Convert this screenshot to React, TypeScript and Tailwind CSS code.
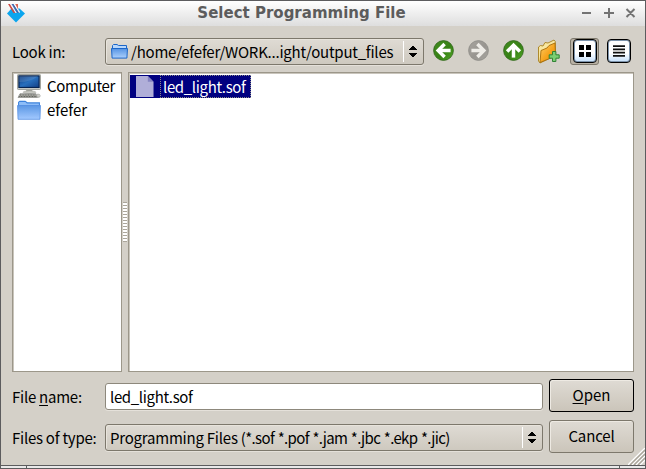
import React from "react";

const UI_FONT = "font-['Noto_Sans_CJK_SC','Noto_Sans',sans-serif]";

function UpDownArrows() {
  return (
    <svg width="8" height="12" viewBox="0 0 8 12" shapeRendering="crispEdges">
      <path d="M3 0h2v1h1v1h1v1h1v1H0V3h1V2h1V1h1z" />
      <path d="M0 7h8v1H7v1H6v1H5v1H3v-1H2V9H1V8H0z" />
    </svg>
  );
}

function Folder({ w, h }: { w: number; h: number }) {
  return (
    <svg width={w} height={h} viewBox="0 0 23 20" preserveAspectRatio="none">
      <defs>
        <linearGradient id="folder" x1="0" y1="0" x2="0" y2="1">
          <stop offset="0" stopColor="#5b97e4" />
          <stop offset="1" stopColor="#a3c9ff" />
        </linearGradient>
      </defs>
      <path d="M1 19V2L2.5.7H8L10 2.2H22V19z" fill="#3c82dc" />
      <path d="M2 2h6l1.5 1.5H21V5H2z" fill="#8dbdf8" />
      <path d="M.5 5.5h22L22 19.3H1z" fill="url(#folder)" stroke="#5992e3" strokeWidth=".8" />
    </svg>
  );
}

function SmallFolder() {
  return (
    <svg width="17" height="15" viewBox="0 0 17 15">
      <defs>
        <linearGradient id="smallFolder" x1="0" y1="0" x2="0" y2="1">
          <stop offset="0" stopColor="#5493e3" />
          <stop offset="1" stopColor="#acd0fc" />
        </linearGradient>
      </defs>
      <path d="M1.5 13.5V1.5L2.5.5H6L7.5 1.5h8v12z" fill="#b8d7fb" stroke="#1b66c9" />
      <path d="M.5 4.5h16l-.6 9.6H1.1z" fill="url(#smallFolder)" stroke="#1b66c9" />
    </svg>
  );
}

function Computer() {
  return (
    <svg width="24" height="24" viewBox="0 0 24 24">
      <defs>
        <linearGradient id="screen" x1="0" y1="0" x2="1" y2="1">
          <stop offset="0" stopColor="#0c3a80" />
          <stop offset=".5" stopColor="#286fbd" />
          <stop offset="1" stopColor="#123f85" />
        </linearGradient>
      </defs>
      <rect x=".5" y=".5" width="23" height="15" rx=".8" fill="#d9dad2" stroke="#8e9189" strokeWidth=".8" />
      <rect x="1.9" y="1.9" width="20.2" height="11.6" fill="url(#screen)" stroke="#062350" strokeWidth="1.2" />
      <path d="M2 2h19Q14 8 2 8z" fill="#fff" opacity=".12" />
      <path d="M9.5 15.5h5.5l1 3H8.5z" fill="#a7a9a2" />
      <ellipse cx="12.5" cy="18.2" rx="6.5" ry="1.3" fill="#c9cac4" stroke="#8b8d87" strokeWidth=".4" />
      <path d="M3 19.7h16l1.5 3.8H1z" fill="#b4b5af" stroke="#777973" strokeWidth=".6" />
      <path d="M3 21h15.5M2.3 22.5h17" stroke="#4e504b" strokeWidth=".9" strokeDasharray="1 .6" />
      <path d="M20.5 20q2.7 0 2.7 1.8t-2 1.6z" fill="#dadbd5" stroke="#858780" strokeWidth=".5" />
    </svg>
  );
}

function RoundArrow({ turn, gray }: { turn: number; gray?: boolean }) {
  const id = gray ? "disc-gray" : "disc-green";
  return (
    <svg width="21" height="22" viewBox="0 0 21 22">
      <defs>
        <linearGradient id={id} x1="0" y1="0" x2="1" y2="1">
          <stop offset="0" stopColor={gray ? "#a7a49e" : "#438c22"} />
          <stop offset=".55" stopColor={gray ? "#989590" : "#378115"} />
          <stop offset="1" stopColor={gray ? "#aaa8a2" : "#52a827"} />
        </linearGradient>
      </defs>
      <circle cx="10.5" cy="10.5" r="9.9" fill={`url(#${id})`} stroke={gray ? "#8d8b87" : "#2e641b"} strokeWidth=".8" />
      <g transform={`rotate(${turn} 10.5 10.5)`} fill="none" stroke={gray ? "#eeece7" : "#fff"} strokeWidth="3.5">
        <path d="M17.6 10.5H6" />
        <path d="M11.6 4.1L5.2 10.5l6.4 6.4" strokeLinejoin="miter" />
      </g>
    </svg>
  );
}

function NewFolder() {
  return (
    <svg width="24" height="25" viewBox="0 0 24 25">
      <defs>
        <linearGradient id="orange" x1="0" y1="0" x2="1" y2="1">
          <stop offset="0" stopColor="#ffd06a" />
          <stop offset=".55" stopColor="#f6a31c" />
          <stop offset="1" stopColor="#e88d00" />
        </linearGradient>
      </defs>
      <path d="M1.5 22V8l2-1.5L6 7l2-3.5 3 .5L17 1l1.3 1.5v14L3 24z" fill="#f8e7a0" stroke="#a7801f" strokeWidth=".9" />
      <path d="M4 11.5l6-2.5 2-2.5 6-2.5.6 13L3 23.5z" fill="url(#orange)" stroke="#a66c0b" strokeWidth=".9" />
      <path d="M15.5 12.5h3.4v3.3h3.3v3.4h-3.3v3.3h-3.4v-3.3h-3.3v-3.4h3.3z" fill="#7bce72" stroke="#318335" strokeWidth="1" />
    </svg>
  );
}

function ViewButton({ children }: { children: React.ReactNode }) {
  return (
    <div className="flex h-6 w-6 items-center justify-center rounded-[4px] border border-black bg-linear-to-b from-white from-60% to-[#c3dffb] shadow-[inset_0_0_0_1px_#7d93ab]">
      {children}
    </div>
  );
}

function Label({ children }: { children: React.ReactNode }) {
  return <div className="w-[93px] shrink-0 tracking-[-0.25px] whitespace-nowrap">{children}</div>;
}

function PushButton({ children, main }: { children: React.ReactNode; main?: boolean }) {
  return (
    <button
      className={`flex h-[33px] w-[85px] items-center justify-center rounded-[3px] border bg-linear-to-b from-[#dfdbd4] to-[#cbc5ba] pb-[2px] leading-none shadow-[inset_1px_1px_0_#eeeae3] ${
        main ? "border-black" : "border-[#7d786c]"
      }`}
    >
      <span>{children}</span>
    </button>
  );
}

const COMBO =
  "flex h-[27px] items-center rounded-[3px] border border-[#7d786c] bg-linear-to-b from-[#dfdbd4] to-[#cec9bf] shadow-[inset_1px_1px_0_#e8e4dc,0_1px_0_#e5e1da]";

export default function App() {
  return (
    <div
      className={`flex h-[469px] w-[646px] flex-col overflow-hidden border border-[#5c5c5e] bg-[#d4d0c8] text-[15px] leading-5 text-black ${UI_FONT}`}
    >
      <header className="flex h-[25px] shrink-0 items-center bg-linear-to-b from-white to-[#dedede]">
        <svg className="mb-px ml-[5px]" width="20" height="20" viewBox="0 0 20 20">
          <path d="M1 10.5L5.5 5.5h8l5.5 5-9 9z" fill="#0ba5ee" />
          <path d="M2 1h2l5.5 9H7.4z" fill="#cf4b43" />
          <path d="M4 1h1.5l5.5 9H9.5z" fill="#f4f4f8" />
          <path d="M5.5 1h2.2l5.5 9H11z" fill="#4169ae" />
          <path d="M7.7 1h1.5l4.8 8-.8 1z" fill="#fff" />
          <path d="M9.2 1H12v5.7L13.5 9z" fill="#db6656" />
        </svg>
        <h1 className="flex-1 pr-[2px] pb-[2px] text-center font-['DejaVu_Sans',sans-serif] text-[15px] font-bold whitespace-nowrap text-[#5c5c5c]">
          Select Programming File
        </h1>
        <svg className="mr-2 mb-[2px]" width="58" height="12" viewBox="0 0 58 12" fill="none" stroke="#737373" strokeWidth="2">
          <path d="M3 6h9M25 6h10M30 1v10M47.5 2l8 8M55.5 2l-8 8" />
        </svg>
      </header>

      <main className="flex shrink-0 flex-col pr-[11px] pl-[11px]">
        <div className="mt-3 flex h-[27px] items-center">
          <Label>Look in:</Label>
          <div className={`${COMBO} w-[319px]`}>
            <div className="ml-[5px] flex shrink-0"><SmallFolder /></div>
            <span className="ml-[3px] min-w-0 flex-1 tracking-[-0.23px] whitespace-nowrap">/home/efefer/WORK...ight/output_files</span>
            <div className="h-[21px] w-px shrink-0 bg-white" />
            <div className="mr-[6px] ml-[5px] shrink-0"><UpDownArrows /></div>
          </div>
          <div className="ml-[9px] flex items-center gap-[14px] pb-[2px]">
            <RoundArrow turn={0} />
            <RoundArrow turn={180} gray />
            <RoundArrow turn={90} />
          </div>
          <div className="ml-[13px]"><NewFolder /></div>
          <div className="ml-[9px] flex h-[27px] w-[29px] justify-center rounded-[3px] border border-[#7d786c] bg-[#b9b2a5]">
            <ViewButton>
              <svg width="12" height="12" viewBox="0 0 12 12" shapeRendering="crispEdges">
                <path d="M0 0h5v5H0zM7 0h5v5H7zM0 7h5v5H0zM7 7h5v5H7z" />
              </svg>
            </ViewButton>
          </div>
          <div className="ml-2 pb-px">
            <ViewButton>
              <svg width="12" height="12" viewBox="0 0 12 12" stroke="#111">
                <path d="M0 1.2h12M0 4.4h12M0 7.6h12M0 10.8h12" strokeWidth="1.7" />
              </svg>
            </ViewButton>
          </div>
        </div>

        <div className="mt-[7px] flex h-[300px]">
          <aside className="w-[110px] shrink-0 border border-[#9c978a] bg-white shadow-[inset_1px_1px_0_#c9c5bc]">
            <div className="flex h-[26px] items-center pl-1">
              <Computer />
              <span className="ml-[6px] tracking-[-0.3px]">Computer</span>
            </div>
            <div className="flex h-[22px] items-center pl-1">
              <Folder w={24} h={20} />
              <span className="ml-[6px]">efefer</span>
            </div>
          </aside>
          <div className="flex w-[6px] items-center justify-center">
            <div className="h-10 w-1 bg-[repeating-linear-gradient(to_bottom,#aaa59a_0px,#aaa59a_1px,#ffffff_1px,#ffffff_3px)]" />
          </div>
          <section className="flex-1 border border-[#9c978a] bg-white pt-[2px] pl-px shadow-[inset_1px_1px_0_#c9c5bc]">
            <div className="flex h-[23px] w-[121px] items-center bg-[#000080] text-white">
              <svg className="ml-[6px] shrink-0" width="18" height="21" viewBox="0 0 19 22">
                <path d="M0 0h12.5L18.5 6v16H0z" fill="#b0aed8" />
                <path d="M12.5 0v6h6z" fill="#8583c0" />
              </svg>
              <span className="ml-[6px] flex h-[23px] w-[91px] shrink-0 items-center border border-dotted border-[#8a8a88] pl-[2px] tracking-[-0.35px] whitespace-nowrap">
                led_light.sof
              </span>
            </div>
          </section>
        </div>

        <div className="mt-[7px] flex">
          <div className="flex flex-col pt-1">
            <div className="flex h-[27px] items-center">
              <Label>File <span className="underline underline-offset-2">n</span>ame:</Label>
              <div className="flex h-[27px] w-[438px] items-center rounded-[3px] border border-[#8d887c] bg-white pl-1 tracking-[-0.35px] shadow-[0_1px_0_#e5e1da]">
                led_light.sof
              </div>
            </div>
            <div className="mt-[14px] flex h-[27px] items-center">
              <Label>Files of type:</Label>
              <div className={`${COMBO} w-[438px]`}>
                <span className="flex-1 pl-1 tracking-[-0.66px] whitespace-nowrap [word-spacing:0.9px]">
                  <span className="tracking-[-0.22px] [word-spacing:0]">Programming Files </span>
                  (*.sof *.pof *.jam *.jbc *.ekp *.jic)
                </span>
                <div className="h-[21px] w-px bg-white" />
                <div className="mr-[6px] ml-[5px]"><UpDownArrows /></div>
              </div>
            </div>
          </div>
          <div className="ml-[6px] flex flex-col gap-2">
            <PushButton main><span className="underline underline-offset-2">O</span>pen</PushButton>
            <PushButton><span className="tracking-[-0.15px]">Cancel</span></PushButton>
          </div>
        </div>
      </main>

      <footer className="mt-auto flex flex-col">
        <svg className="-mt-3 self-end" width="17" height="17" viewBox="0 0 17 17" stroke="#fff" strokeWidth="1.4">
          <path d="M0 17L17 0M4 17L17 4M8 17L17 8M12 17L17 12" />
          <path d="M2 17L17 2M6 17L17 6M10 17L17 10" stroke="#aaa59a" />
        </svg>
        <div className="h-px bg-[#5c5c5e]" />
        <div className="flex h-[2px] bg-[#e9e9e9]">
          <div className="ml-[25px] h-[2px] w-px bg-[#5c5c5e]" />
          <div className="ml-[592px] h-[2px] w-px bg-[#5c5c5e]" />
        </div>
      </footer>
    </div>
  );
}
